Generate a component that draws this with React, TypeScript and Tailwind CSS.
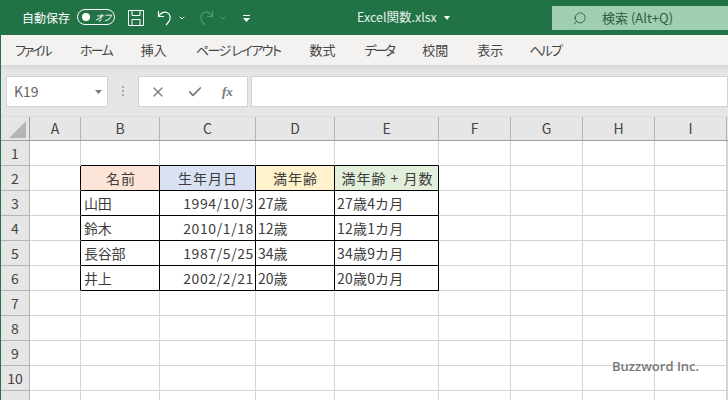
import { Check, ChevronDown, Search, X } from 'lucide-react'

const tabs = [
  { label: 'ファイル', cls: 'tracking-[-2.500px]' },
  { label: 'ホーム', cls: 'ml-[1px] tracking-[-1.800px]' },
  { label: '挿入', cls: '' },
  { label: 'ページ レイアウト', cls: 'tracking-[-1.500px]' },
  { label: '数式', cls: '' },
  { label: 'データ', cls: 'tracking-[-2.500px]' },
  { label: '校閲', cls: '' },
  { label: '表示', cls: '' },
  { label: 'ヘルプ', cls: '-ml-[3px] tracking-[-1.800px]' },
]
const columns = ['A', 'B', 'C', 'D', 'E', 'F', 'G', 'H', 'I']

const people = [
  ['山田', '1994/10/3', '27歳', '27歳4カ月'],
  ['鈴木', '2010/1/18', '12歳', '12歳1カ月'],
  ['長谷部', '1987/5/25', '34歳', '34歳9カ月'],
  ['井上', '2002/2/21', '20歳', '20歳0カ月'],
]

const gridCell = 'h-[25px] border-r border-b border-[#d4d4d4]'
const boxed = 'h-[25px] border-r border-b border-black flex items-center overflow-hidden whitespace-nowrap text-[14px] text-[#3c3c3c]'
const headerCell = 'h-[25px] border-r border-b border-black flex items-center justify-center whitespace-nowrap text-[14px] text-[#3c3c3c] tracking-[1px]'

function Row({ n, children }: { n?: number; children: React.ReactNode }) {
  return (
    <>
      <div className="h-[25px] border-r border-b border-[#b4b4b4] bg-[#e6e6e6] flex items-center justify-center text-[14px] text-[#444]">
        {n}
      </div>
      {children}
    </>
  )
}

function EmptyCells({ count }: { count: number }) {
  return (
    <>
      {Array.from({ length: count }).map((_, i) => (
        <div key={i} className={gridCell} />
      ))}
    </>
  )
}

export default function App() {
  return (
    <div className="w-[728px] h-[400px] overflow-hidden bg-white flex flex-col font-['Noto_Sans_CJK_JP',sans-serif]">
      <div className="h-[35px] shrink-0 bg-[#217346] flex text-white">
        <span className="ml-[22px] mt-[10px] text-[12px] leading-[16px]">自動保存</span>
        <div className="ml-[7px] mt-[9px] w-[38px] h-[16px] rounded-full border border-white flex items-center pl-[4px] gap-[5px]">
          <div className="w-[8px] h-[8px] rounded-full bg-white" />
          <span className="text-[9px] leading-none italic [font-feature-settings:'palt']">オフ</span>
        </div>
        <svg className="ml-[13px] mt-[10px]" width="16" height="16" viewBox="0 0 16 16" fill="none" stroke="white" strokeWidth="1">
          <path d="M.5.5h15v15H.5zM4 .5v5h8V.5M4 15.5V9.5h8v6" />
        </svg>
        <svg className="ml-[13px] mt-[10px]" width="16" height="16" viewBox="0 0 16 16" fill="none" stroke="white" strokeWidth="1.2">
          <path d="M1.500 1v5.500H7M2 6c2-3 5-4.500 8-3.500 3.500 1.500 4 6 2 9l-3 3.500" />
        </svg>
        <ChevronDown className="ml-[5px] mt-[14px]" size={8} strokeWidth={3} />
        <svg className="ml-[12px] mt-[10px]" width="16" height="16" viewBox="0 0 16 16" fill="none" stroke="#4f9a72" strokeWidth="1.2">
          <path d="M14.500 1v5.500H9M14 6c-2-3-5-4.500-8-3.500-3.500 1.500-4 6-2 9l3 3.500" />
        </svg>
        <ChevronDown className="ml-[5px] mt-[14px] text-[#4f9a72]" size={8} strokeWidth={3} />
        <svg className="ml-[16px] mt-[15px]" width="7" height="7" viewBox="0 0 7 7" fill="white">
          <path d="M0 0h7v1H0zM0 3h7L3.500 7z" />
        </svg>
        <span className="ml-[107px] mt-[9px] text-[12.500px] leading-[16px] text-[#e4f0e9] whitespace-nowrap">Excel関数.xlsx</span>
        <svg className="ml-[7px] mt-[16px]" width="6" height="4" viewBox="0 0 6 4" fill="white">
          <path d="M0 0h6L3 4z" />
        </svg>
        <div className="ml-auto mt-[6px] w-[176px] h-[24px] bg-[#9fcfb0] flex items-center text-[#2d5c44]">
          <Search className="ml-[20px] -scale-x-100" size={15} strokeWidth={1.4} />
          <span className="ml-[15px] text-[13px] whitespace-nowrap">検索 (Alt+Q)</span>
        </div>
      </div>

      <div className="flex-1 min-h-0 flex flex-col border-l border-[#217346]">
        <div className="h-[30px] shrink-0 bg-[#f3f2f1] flex items-center gap-[29px] pl-[14px] text-[13px] text-[#444] [font-feature-settings:'palt']">
          {tabs.map((tab) => (
            <span key={tab.label} className={`whitespace-nowrap ${tab.cls}`}>
              {tab.label}
            </span>
          ))}
        </div>

        <div className="h-[52px] shrink-0 bg-gradient-to-b from-[#d6d6d6] from-0% to-[#e6e6e6] to-[12%] flex pt-[11px] pl-[5px] border-b border-[#dcdcdc]">
          <div className="w-[102px] h-[31px] bg-white border border-[#d2d2d2] flex items-center justify-between pl-[7px] pr-[5px] text-[14px] text-[#666]">
            <span>K19</span>
            <svg width="7" height="4" viewBox="0 0 7 4" fill="#777">
              <path d="M0 0h7L3.500 4z" />
            </svg>
          </div>
          <div className="ml-[14px] mt-[10px] flex flex-col gap-[2px]">
            <div className="w-[2px] h-[2px] bg-[#aaa]" />
            <div className="w-[2px] h-[2px] bg-[#aaa]" />
            <div className="w-[2px] h-[2px] bg-[#aaa]" />
          </div>
          <div className="ml-[14px] w-[110px] h-[31px] bg-white border border-[#d2d2d2] flex items-center text-[#777]">
            <X className="ml-[11px]" size={16} strokeWidth={1.8} />
            <Check className="ml-[21px]" size={16} strokeWidth={2.6} />
            <span className="ml-[19px] text-[13px] font-bold italic font-['Liberation_Serif',serif]">fx</span>
          </div>
          <div className="ml-[3px] flex-1 h-[31px] bg-white border border-[#d2d2d2]" />
        </div>

        <div className="relative flex-1 min-h-0 overflow-hidden">
          <div className="grid grid-cols-[29px_51px_79px_96px_79px_104px_72px_72px_72px_72px_1fr]">
            <div className="h-[24px] border-r border-b border-[#9e9e9e] bg-[#e6e6e6] flex items-end justify-end p-[2px] pr-[3px]">
              <svg width="17" height="17" viewBox="0 0 17 17" fill="#b5b5b5">
                <path d="M17 0v17H0z" />
              </svg>
            </div>
            {columns.map((c) => (
              <div key={c} className="h-[24px] border-r border-b border-r-[#b4b4b4] border-b-[#9e9e9e] bg-[#e6e6e6] flex items-center justify-center text-[14px] text-[#444]">
                {c}
              </div>
            ))}
            <div className="h-[24px] border-b border-[#9e9e9e] bg-[#e6e6e6]" />

            <Row n={1}>
              <div className={gridCell} />
              <div className="h-[25px] border-r border-b border-r-[#d4d4d4] border-b-black" />
              <div className="h-[25px] border-r border-b border-r-[#d4d4d4] border-b-black" />
              <div className="h-[25px] border-r border-b border-r-[#d4d4d4] border-b-black" />
              <div className="h-[25px] border-r border-b border-r-[#d4d4d4] border-b-black" />
              <EmptyCells count={5} />
            </Row>

            <Row n={2}>
              <div className="h-[25px] border-r border-b border-r-black border-b-[#d4d4d4]" />
              <div className={`${headerCell} bg-[#fce4d6] pl-[2px]`}>名前</div>
              <div className={`${headerCell} bg-[#d9e1f2] pl-[1px]`}>生年月日</div>
              <div className={`${headerCell} bg-[#fff2cc] pl-[1px]`}>満年齢</div>
              <div className={`${headerCell} bg-[#e2efda] pl-[2px]`}>満年齢 + 月数</div>
              <EmptyCells count={5} />
            </Row>

            {people.map((p, i) => (
              <Row key={p[0]} n={i + 3}>
                <div className="h-[25px] border-r border-b border-r-black border-b-[#d4d4d4]" />
                <div className={`${boxed} pl-[3px] tracking-[-0.300px]`}>{p[0]}</div>
                <div className={`${boxed} justify-end pr-[1px] tracking-[0.600px]`}>{p[1]}</div>
                <div className={`${boxed} pl-[2px]`}>{p[2]}</div>
                <div className={`${boxed} pl-[2px] tracking-[0.200px]`}>{p[3]}</div>
                <EmptyCells count={5} />
              </Row>
            ))}

            {[7, 8, 9, 10].map((n) => (
              <Row key={n} n={n}>
                <EmptyCells count={10} />
              </Row>
            ))}
            <Row>
              <EmptyCells count={10} />
            </Row>
          </div>
          <span className="absolute left-[611px] top-[240px] text-[13px] font-['Open_Sans',sans-serif] font-semibold text-[#777] whitespace-nowrap">
            Buzzword Inc.
          </span>
        </div>
      </div>
    </div>
  )
}
